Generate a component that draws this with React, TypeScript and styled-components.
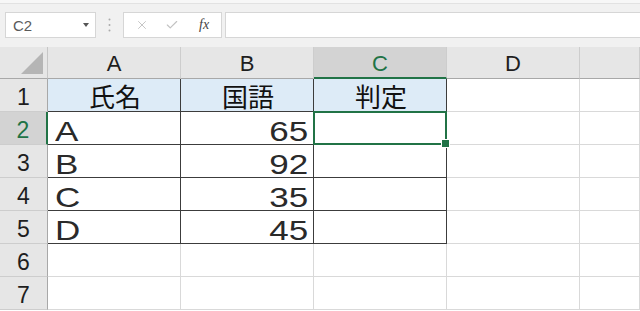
import React from "react";
import styled, { createGlobalStyle, css } from "styled-components";
import { X, Check } from "lucide-react";

const GlobalStyle = createGlobalStyle`
  html, body { margin: 0; padding: 0; background: #fff; overflow: hidden; }
  * { box-sizing: border-box; }
`;

const GREEN = "#217346";
const CELL_FONT = `"Noto Sans CJK JP", "Liberation Sans", sans-serif`;
const HEAD_FONT = `"Liberation Sans", Arial, sans-serif`;

const Sheet = styled.div`
  width: 640px;
  height: 311px;
  display: flex;
  flex-direction: column;
  background: #fff;
`;

const Toolbar = styled.div`
  height: 47px;
  display: flex;
  align-items: flex-start;
  padding: 9px 0 0 5px;
  background: #f1f1f1;
  border-top: 3px solid #f7f7f7;
  box-shadow: inset 0 1px 0 #e2e2e2;
`;

const NameBox = styled.div`
  width: 91px;
  height: 26px;
  background: #fff;
  border: 1px solid #d6d6d6;
  display: flex;
  align-items: center;
  justify-content: space-between;
  padding: 0 6px 0 7px;
  font-family: ${HEAD_FONT};
  font-size: 15px;
  color: #5a5a5a;
`;

const DropArrow = styled.span`
  width: 0;
  height: 0;
  border-left: 3.5px solid transparent;
  border-right: 3.5px solid transparent;
  border-top: 4px solid #555;
`;

const Grip = styled.div`
  width: 27px;
  height: 26px;
  display: flex;
  align-items: center;
  justify-content: center;
`;

const FxBox = styled.div`
  width: 99px;
  height: 26px;
  background: #fff;
  border: 1px solid #d6d6d6;
  display: flex;
  align-items: center;
  gap: 16px;
  padding: 0 0 0 11px;
  color: #c2c2c2;
`;

const FxLabel = styled.span`
  margin-left: 4px;
  font-family: "Liberation Serif", "Times New Roman", serif;
  font-style: italic;
  font-size: 14px;
  color: #444;
`;

const FormulaInput = styled.div`
  flex: 1;
  height: 26px;
  margin-left: 3px;
  background: #fff;
  border: 1px solid #d6d6d6;
  border-right: none;
`;

const Grid = styled.div`
  display: grid;
  grid-template-columns: 48px repeat(4, 133px) 1fr;
  grid-template-rows: 32px;
  grid-auto-rows: 33px;
`;

const Corner = styled.div`
  background: #e6e6e6;
  border-right: 1px solid #c6c6c6;
  border-bottom: 1px solid #a8a8a8;
  display: flex;
  align-items: flex-end;
  justify-content: flex-end;
  padding: 0 4px 4px 0;
`;

const ColHead = styled.div<{ $selected?: boolean }>`
  background: ${(p) => (p.$selected ? "#d3d3d3" : "#e6e6e6")};
  border-right: 1px solid #cdcdcd;
  border-bottom: ${(p) => (p.$selected ? `2px solid ${GREEN}` : "1px solid #a8a8a8")};
  color: ${(p) => (p.$selected ? GREEN : "#1e1e1e")};
  font-family: ${HEAD_FONT};
  font-size: 22px;
  display: flex;
  align-items: center;
  justify-content: center;
  padding-top: ${(p) => (p.$selected ? "3px" : "2px")};
`;

const RowHead = styled.div<{ $selected?: boolean }>`
  background: ${(p) => (p.$selected ? "#d3d3d3" : "#e6e6e6")};
  border-right: ${(p) => (p.$selected ? `2px solid ${GREEN}` : "1px solid #a8a8a8")};
  border-bottom: 1px solid #cdcdcd;
  color: ${(p) => (p.$selected ? GREEN : "#1e1e1e")};
  font-family: ${HEAD_FONT};
  font-size: 23px;
  display: flex;
  align-items: center;
  justify-content: center;
  padding-top: 5px;
`;

type Align = "left" | "right" | "center";

const Cell = styled.div<{ $table?: boolean; $fill?: boolean; $align?: Align; $active?: boolean }>`
  position: relative;
  background: ${(p) => (p.$fill ? "#ddebf7" : "#fff")};
  border-right: 1px solid ${(p) => (p.$table ? "#3c3c3c" : "#d9d9d9")};
  border-bottom: 1px solid ${(p) => (p.$table ? "#3c3c3c" : "#d9d9d9")};
  display: flex;
  align-items: flex-end;
  justify-content: ${(p) =>
    p.$align === "right" ? "flex-end" : p.$align === "center" ? "center" : "flex-start"};
  padding: 0 5px 0 7px;
  font-family: ${CELL_FONT};
  color: #111;
  ${(p) =>
    p.$active &&
    css`
      &::after {
        content: "";
        position: absolute;
        left: -1px;
        top: -1px;
        right: -1px;
        bottom: -1px;
        border: 2px solid ${GREEN};
      }
      &::before {
        content: "";
        position: absolute;
        right: -4px;
        bottom: -4px;
        width: 7px;
        height: 7px;
        background: ${GREEN};
        border: 1px solid #fff;
        z-index: 1;
      }
    `}
`;

const Latin = styled.span<{ $align?: Align }>`
  display: inline-block;
  font-family: "Liberation Sans", Arial, sans-serif;
  font-weight: 400;
  font-size: 28px;
  line-height: 28px;
  color: #2a2a2a;
  margin-bottom: -2px;
  transform: scaleX(1.25);
  transform-origin: ${(p) => (p.$align === "right" ? "right" : "left")} bottom;
`;

const Kanji = styled.span`
  font-size: 26px;
  font-weight: 400;
  line-height: 26px;
  margin-bottom: 2px;
`;

const columns = ["A", "B", "C", "D", ""];
const rows: [string, string][] = [
  ["A", "65"],
  ["B", "92"],
  ["C", "35"],
  ["D", "45"],
];

function Toolbox() {
  return (
    <Toolbar>
      <NameBox>
        <span>C2</span>
        <DropArrow />
      </NameBox>
      <Grip>
        <svg width="3" height="14" viewBox="0 0 3 14">
          <circle cx="1.5" cy="1.5" r="1" fill="#aaa" />
          <circle cx="1.5" cy="7" r="1" fill="#aaa" />
          <circle cx="1.5" cy="12.5" r="1" fill="#aaa" />
        </svg>
      </Grip>
      <FxBox>
        <X size={14} strokeWidth={1.6} />
        <Check size={14} strokeWidth={2} />
        <FxLabel>fx</FxLabel>
      </FxBox>
      <FormulaInput />
    </Toolbar>
  );
}

export default function App() {
  return (
    <Sheet>
      <GlobalStyle />
      <Toolbox />
      <Grid>
        <Corner>
          <svg width="22" height="22" viewBox="0 0 22 22">
            <polygon points="22,0 22,22 0,22" fill="#b5b5b5" />
          </svg>
        </Corner>
        {columns.map((c) => (
          <ColHead key={c || "e"} $selected={c === "C"}>
            {c}
          </ColHead>
        ))}

        <RowHead>1</RowHead>
        <Cell $table $fill $align="center">
          <Kanji>氏名</Kanji>
        </Cell>
        <Cell $table $fill $align="center">
          <Kanji>国語</Kanji>
        </Cell>
        <Cell $table $fill $align="center">
          <Kanji>判定</Kanji>
        </Cell>
        <Cell />
        <Cell />

        {rows.map(([name, score], i) => (
          <React.Fragment key={name}>
            <RowHead $selected={i === 0}>{i + 2}</RowHead>
            <Cell $table>
              <Latin>{name}</Latin>
            </Cell>
            <Cell $table $align="right">
              <Latin $align="right">{score}</Latin>
            </Cell>
            <Cell $table $active={i === 0} />
            <Cell />
            <Cell />
          </React.Fragment>
        ))}

        {[6, 7].map((n) => (
          <React.Fragment key={n}>
            <RowHead>{n}</RowHead>
            <Cell />
            <Cell />
            <Cell />
            <Cell />
            <Cell />
          </React.Fragment>
        ))}
      </Grid>
    </Sheet>
  );
}
